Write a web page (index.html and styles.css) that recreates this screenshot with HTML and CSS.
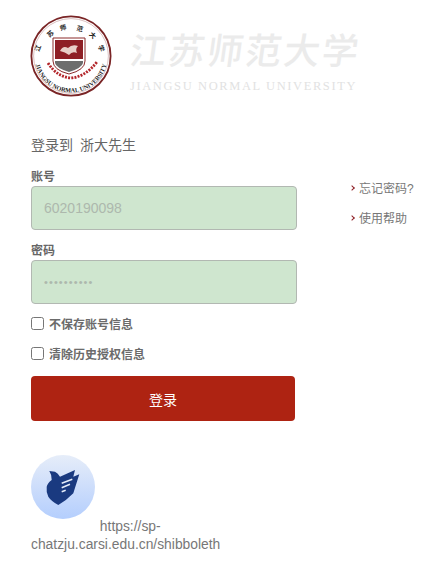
FILE: index.html
```html
<!DOCTYPE html>
<html lang="zh-CN">
<head>
    <meta charset="UTF-8">
    <meta name="viewport" content="width=device-width, initial-scale=1.0">
    <title>统一身份认证</title>
    <link rel="stylesheet" href="styles.css">
</head>
<body>
    <header class="brand">
        <svg class="seal" viewBox="0 0 84 84" width="84" height="84" aria-hidden="true">
            <defs>
                <path id="sealBottom" d="M 5.5 42 A 36.5 36.5 0 0 0 78.5 42"/>
            </defs>
            <circle cx="42" cy="42" r="39.6" fill="#fff" stroke="#7a2526" stroke-width="1.8"/>
            <circle cx="42" cy="42" r="37.4" fill="none" stroke="#b58484" stroke-width="0.5"/>
            <text class="seal-cn" x="10" y="38" transform="rotate(-70 10 38)">江</text>
            <text class="seal-cn" x="20.6" y="23.7" transform="rotate(-42 20.6 23.7)">苏</text>
            <text class="seal-cn" x="31.5" y="16.8" transform="rotate(-14 31.5 16.8)">师</text>
            <text class="seal-cn" x="47" y="16" transform="rotate(17 47 16)">范</text>
            <text class="seal-cn" x="59.7" y="20.7" transform="rotate(45 59.7 20.7)">大</text>
            <text class="seal-cn" x="69" y="32" transform="rotate(70 69 32)">学</text>
            <text class="seal-en"><textPath href="#sealBottom" startOffset="50%" text-anchor="middle" side="left">JIANGSU NORMAL UNIVERSITY</textPath></text>
            <path d="M24 24 H56 V47 Q56 56 40 60 Q24 56 24 47 Z" fill="#fff" stroke="#8b2a2b" stroke-width="1"/>
            <path d="M26 26 H54 V45 H26 Z" fill="#8e1f25"/>
            <path d="M26 47 H54 V49 Q53 54 40 58 Q27 54 26 49 Z" fill="#6d6d6d"/>
            <path d="M31 37 Q34 31 39 34 Q43 30 49 32 Q46 35 48 39 Q43 37 40 41 Q36 38 31 37 Z" fill="#e8cfc8"/>
            <path d="M19 49 Q28 63 42 64 Q56 63 68 48" fill="none" stroke="#b3262b" stroke-width="2.8" stroke-dasharray="2 1.2"/>
        </svg>
        <div class="wordmark">
            <div class="wordmark-cn"><span>江</span><span>苏</span><span>师</span><span>范</span><span>大</span><span>学</span></div>
            <div class="wordmark-en">JIANGSU NORMAL UNIVERSITY</div>
        </div>
    </header>

    <main class="content">
        <form class="login">
            <p class="login-title">登录到 浙大先生</p>
            <label class="field-label" for="username">账号</label>
            <input class="field" id="username" type="text" value="6020190098">
            <label class="field-label" for="password">密码</label>
            <input class="field" id="password" type="password" value="1234567890">
            <label class="check"><input type="checkbox"> 不保存账号信息</label>
            <label class="check"><input type="checkbox"> 清除历史授权信息</label>
            <button class="submit" type="button">登录</button>
        </form>
        <ul class="help">
            <li><a href="#">忘记密码?</a></li>
            <li><a href="#">使用帮助</a></li>
        </ul>
    </main>

    <p class="service">
        <svg class="service-icon" viewBox="0 0 64 64" width="64" height="64" aria-hidden="true">
            <defs>
                <linearGradient id="iconBg" x1="0" y1="0" x2="0" y2="1">
                    <stop offset="0" stop-color="#e6edf9"/>
                    <stop offset="1" stop-color="#b4cefd"/>
                </linearGradient>
            </defs>
            <circle cx="32" cy="32" r="32" fill="url(#iconBg)"/>
            <path d="M18.3 16 L24 16.7 Q27 18 29 21.7 L44 15 L42.3 21.7 L48.3 19.3 L42.3 38.3 Q36 45 27.3 50 Q20 46 17.3 41.7 Q15 37 15.7 31.7 Q16.5 28 20.7 25 Q21 20 18.3 16 Z" fill="#1a3a80"/>
            <path d="M30.7 28.3 L41.3 24.3 M30.7 32.7 L39 29.3 M30.7 36.7 L34.7 35.3" stroke="#e6edf9" stroke-width="1.5" fill="none"/>
        </svg>
        https://sp-chatzju.carsi.edu.cn/shibboleth
    </p>
</body>
</html>
```

FILE: styles.css
```css
body {
    margin: 0;
    padding: 14px 0 0 29px;
    font-family: "Liberation Sans", "Noto Sans CJK SC", sans-serif;
    color: #666;
    background: #fff;
}

/* Header */
.brand {
    display: flex;
    align-items: flex-start;
    gap: 17px;
    height: 122px;
}

.seal-cn {
    font-size: 6.5px;
    font-weight: 700;
    fill: #222;
}

.seal-en {
    font-family: "Liberation Serif", serif;
    font-size: 6.2px;
    font-weight: 700;
    fill: #222;
}

.wordmark {
    width: 228px;
    padding-top: 15px;
}

.wordmark-cn {
    display: flex;
    justify-content: space-between;
    height: 50px;
    font-size: 36px;
    line-height: 46px;
    font-weight: 500;
    color: #ebebeb;
    transform: skewX(-8deg);
}

.wordmark-en {
    font-family: "Liberation Serif", serif;
    font-size: 12.5px;
    line-height: 14px;
    letter-spacing: 1.6px;
    white-space: nowrap;
    color: #e2e2e2;
}

/* Login */
.content {
    display: flex;
    padding-left: 2px;
}

.login {
    width: 266px;
}

.login-title {
    margin: 0 0 16px;
    font-size: 14px;
    line-height: 18px;
    word-spacing: 3px;
}

.field-label {
    display: block;
    font-size: 12px;
    line-height: 14px;
    margin-bottom: 2px;
    font-weight: 700;
}

.field {
    display: block;
    box-sizing: border-box;
    width: 266px;
    height: 44px;
    margin: 0 0 14px;
    padding: 0 12px;
    border: 1px solid #b2b8b2;
    border-radius: 4px;
    background: #cfe6cf;
    font-family: inherit;
    font-size: 14px;
    color: #adb8ad;
}

#password {
    margin-bottom: 12px;
    font-size: 11px;
    letter-spacing: 1.1px;
}

.check {
    display: flex;
    align-items: center;
    gap: 5px;
    height: 14px;
    margin-bottom: 16px;
    font-size: 12px;
    font-weight: 700;
    color: #6b6b6b;
}

.check input {
    width: 13px;
    height: 13px;
    margin: 0;
}

.submit {
    display: block;
    width: 264px;
    height: 45px;
    margin-top: 16px;
    border: none;
    border-radius: 4px;
    background: #ae2312;
    color: #fff;
    font-family: inherit;
    font-size: 14px;
}

/* Help links */
.help {
    list-style: none;
    margin: 46px 0 0;
    padding: 0 0 0 53px;
}

.help li {
    position: relative;
    height: 30px;
    padding-left: 9px;
    font-size: 12px;
    line-height: 14px;
}

.help li::before {
    content: "";
    position: absolute;
    left: 0;
    top: 4px;
    width: 3px;
    height: 3px;
    border-top: 1.2px solid #8e1f25;
    border-right: 1.2px solid #8e1f25;
    transform: rotate(45deg);
}

.help a {
    color: #777;
    text-decoration: none;
}

/* Service */
.service {
    width: 200px;
    margin: 34px 0 0 2px;
    font-size: 13.85px;
    line-height: 18px;
    color: #777;
    overflow-wrap: break-word;
}

.service-icon {
    vertical-align: 12px;
    margin-right: 1px;
}
```
